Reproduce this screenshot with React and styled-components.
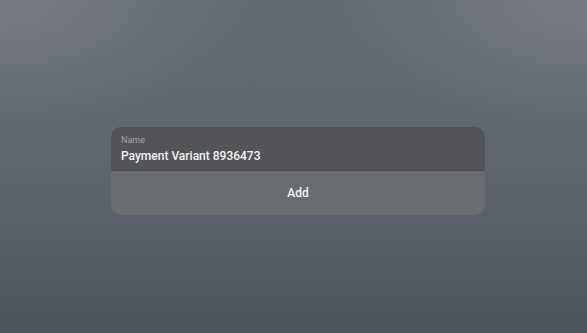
import React from 'react';
import styled, { createGlobalStyle } from 'styled-components';

const GlobalStyle = createGlobalStyle`
  html, body {
    margin: 0;
    padding: 0;
  }
  body {
    font-family: Roboto, "Liberation Sans", sans-serif;
  }
`;

const Screen = styled.div`
  width: 587px;
  height: 333px;
  display: flex;
  align-items: flex-start;
  padding: 127px 0 0 111px;
  box-sizing: border-box;
  background:
    radial-gradient(ellipse 60% 55% at 0% 0%, rgba(124, 126, 136, 0.85), rgba(124, 126, 136, 0) 70%),
    radial-gradient(ellipse 60% 55% at 100% 0%, rgba(124, 126, 136, 0.85), rgba(124, 126, 136, 0) 70%),
    linear-gradient(180deg, #626a73 0%, #5e666f 50%, #4d545c 100%);
`;

const Card = styled.div`
  width: 374px;
  height: 88px;
  border-radius: 10px;
  overflow: hidden;
  display: flex;
  flex-direction: column;
`;

const Field = styled.div`
  height: 44px;
  box-sizing: border-box;
  background: #525458;
  border-bottom: 1px solid #4a4c50;
  padding: 8px 10px 0;
  display: flex;
  flex-direction: column;
`;

const Label = styled.span`
  font-size: 9px;
  line-height: 11px;
  color: #a2a4a8;
`;

const Value = styled.span`
  margin-top: 2px;
  font-size: 12px;
  line-height: 16px;
  font-weight: 500;
  color: #f2f2f3;
`;

const AddButton = styled.button`
  flex: 1;
  border: none;
  background: #6a6d70;
  color: #f4f4f4;
  font-family: Roboto, "Liberation Sans", sans-serif;
  font-size: 12px;
  font-weight: 500;
  padding: 0;
  cursor: pointer;
`;

export default function App() {
  return (
    <>
      <GlobalStyle />
      <Screen>
        <Card>
          <Field>
            <Label>Name</Label>
            <Value>Payment Variant 8936473</Value>
          </Field>
          <AddButton>Add</AddButton>
        </Card>
      </Screen>
    </>
  );
}
